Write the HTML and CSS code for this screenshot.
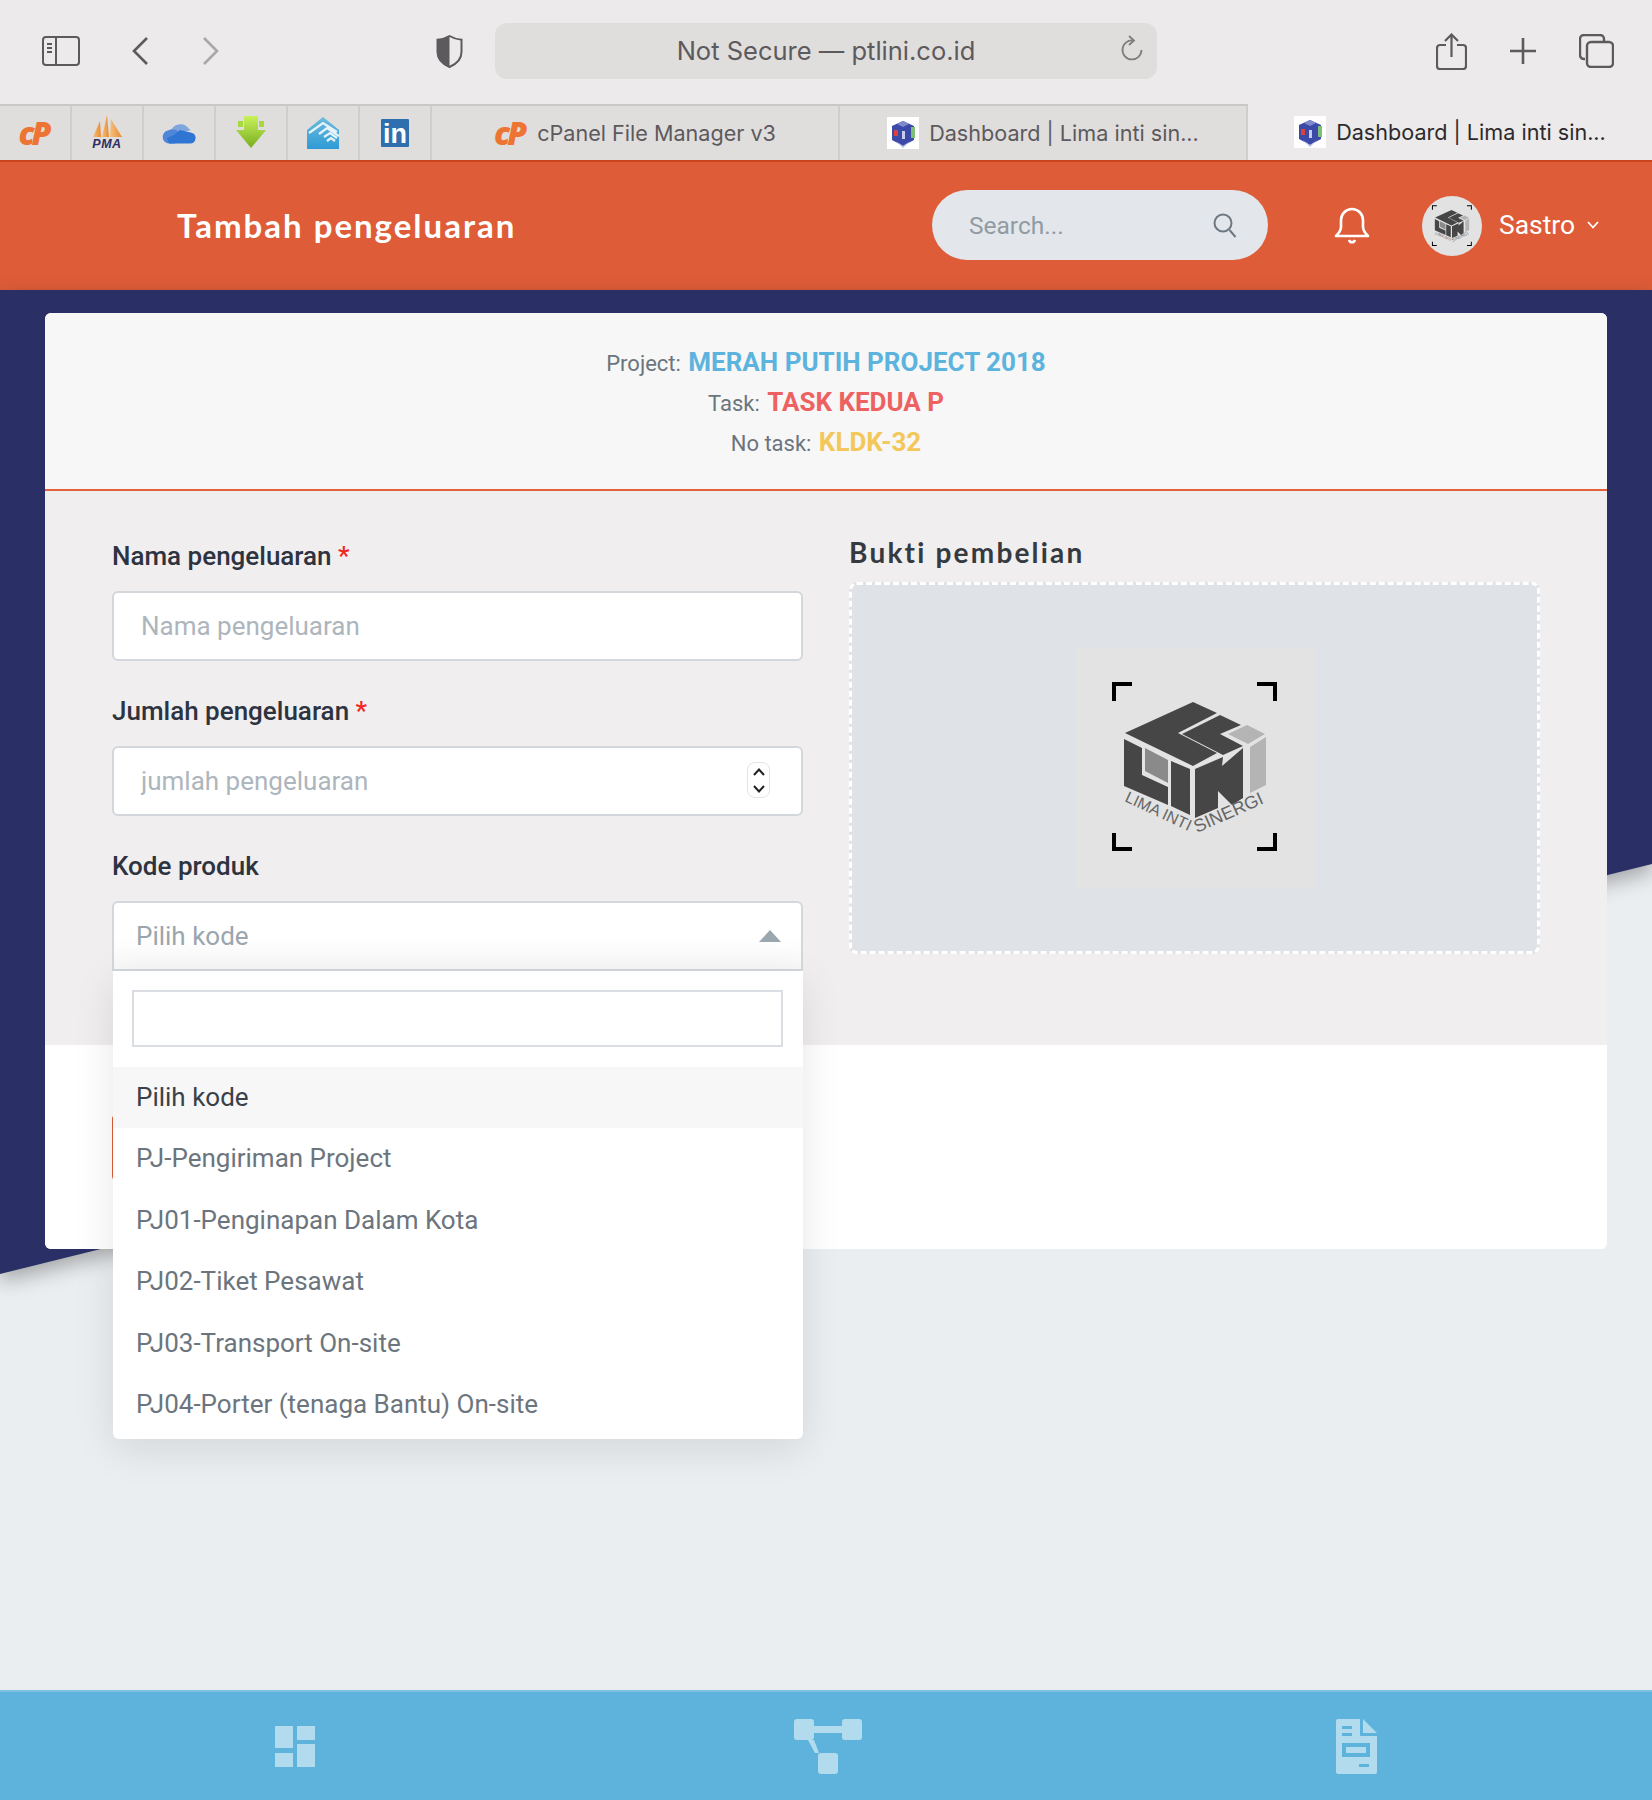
FILE: index.html
```html
<!DOCTYPE html>
<html lang="en">
<head>
  <meta charset="UTF-8" />
  <meta name="viewport" content="width=device-width, initial-scale=1" />
  <title>Tambah pengeluaran</title>
  <link rel="stylesheet" href="styles.css">
</head>

<body>

<svg class="defs" width="0" height="0">
  <defs>
    <symbol id="lisLogo" viewBox="0 0 240 240">
      <g fill="#464646">
        <polygon points="118,54 142,65 103,85 142,105 118,118 50,85" />
        <polygon points="145,67 166,77 145,86 168,98 148,107 107,86" />
        <polygon points="49,91 67,100 67,127 93,139 93,157 49,138" />
        <polygon points="96,113 115,121 115,167 96,158" />
        <polygon points="120,121 148,109 147,118 168,100 168,150 157,157 143,143 143,160 120,170" />
      </g>
      <polygon fill="#b4b4b4" points="172,77 190,86 173,96 153,86" />
      <polygon fill="#b4b4b4" points="175,99 191,89 191,137 175,145" />
      <polygon fill="#8a8a8a" points="70,100 93,112 93,135 70,123" />
      <g fill="#000">
        <path d="M37 34h20v4H41v15h-4z" />
        <path d="M182 34h20v19h-4V38h-16z" />
        <path d="M37 185h4v14h16v4H37z" />
        <path d="M198 185h4v18h-20v-4h16z" />
      </g>
      <g class="logo-text">
        <text transform="translate(49 153) rotate(25)">LIMA INTI</text>
        <text class="logo-text-big" transform="translate(122 185) rotate(-24)">SINERGI</text>
      </g>
    </symbol>
    <symbol id="favCube" viewBox="0 0 32 32">
      <rect width="32" height="32" fill="#fff" />
      <g class="fav-blur">
        <polygon fill="#3b49a8" points="16,4 27,9 27,23 16,29 5,23 5,9" />
        <polygon fill="#7f8acb" points="16,4 22,7 16,10 10,7" />
        <rect x="7" y="13" width="4" height="6" fill="#d8423a" />
        <rect x="24" y="10" width="4" height="11" fill="#7cc173" />
        <rect x="15" y="14" width="3" height="8" fill="#c8cdec" />
        <polygon fill="#b9bee3" points="9,24 16,29 23,24 16,31" />
      </g>
    </symbol>
  </defs>
</svg>

<div class="browser-bar">
  <div class="bar-left">
    <svg width="38" height="30" viewBox="0 0 38 30" fill="none" stroke="#5c5a5c" stroke-width="2">
      <rect x="1" y="1" width="36" height="28" rx="3" />
      <path d="M14 1v28M5 8h5M5 12h5M5 16h5" />
    </svg>
    <svg class="nav-back" width="16" height="28" viewBox="0 0 16 28" fill="none" stroke="#5c5a5c" stroke-width="2.6">
      <path d="M15 1 2 14l13 13" />
    </svg>
    <svg class="nav-forward" width="16" height="28" viewBox="0 0 16 28" fill="none" stroke="#a9a7a8" stroke-width="2.6">
      <path d="M1 1l13 13L1 27" />
    </svg>
  </div>
  <svg class="shield" width="27" height="33" viewBox="0 0 27 33">
    <path d="M13.5 1C10 3 6 4.500 1.500 4.800V17c0 7 5 12 12 15 7-3 12-8 12-15V4.800C21 4.500 17 3 13.500 1z" fill="none" stroke="#5c5a5c" stroke-width="2" />
    <path d="M13.500 1C10 3 6 4.500 1.500 4.800V17c0 7 5 12 12 15z" fill="#5c5a5c" />
  </svg>
  <div class="url-bar">
    <span>Not Secure — ptlini.co.id</span>
    <svg class="reload" width="22" height="26" viewBox="0 0 22 26" fill="none" stroke="#7f7d7f" stroke-width="1.800">
      <path d="M12 5.500A9.500 9.500 0 1 0 20.500 15" />
      <path d="M8 1l5 4.500L8 10" />
    </svg>
  </div>
  <div class="bar-right">
    <svg width="31" height="37" viewBox="0 0 31 37" fill="none" stroke="#5c5a5c" stroke-width="2.200">
      <path d="M10 12H4a3 3 0 0 0-3 3v18a3 3 0 0 0 3 3h23a3 3 0 0 0 3-3V15a3 3 0 0 0-3-3h-6" />
      <path d="M15.500 24V1.500M9 8l6.500-6.500L22 8" />
    </svg>
    <svg width="28" height="28" viewBox="0 0 28 28" fill="none" stroke="#5c5a5c" stroke-width="2.600">
      <path d="M14 1v26M1 14h26" />
    </svg>
    <svg width="35" height="34" viewBox="0 0 35 34" fill="none" stroke="#5c5a5c" stroke-width="2.400">
      <path d="M6 25H5a4 4 0 0 1-4-4V5a4 4 0 0 1 4-4h16a4 4 0 0 1 4 4v2" />
      <rect x="8" y="8" width="26" height="25" rx="4" />
    </svg>
  </div>
</div>

<div class="tab-bar">
  <div class="pin-tab"><span class="cp-logo">cP</span></div>
  <div class="pin-tab">
    <svg class="pma" width="36" height="38" viewBox="0 0 36 38">
      <defs>
        <linearGradient id="sail" x1="0" y1="0" x2="1" y2="0">
          <stop offset="0" stop-color="#f4c07e" />
          <stop offset="1" stop-color="#e88a30" />
        </linearGradient>
      </defs>
      <polygon fill="url(#sail)" points="4,23 11,7 12,23" />
      <polygon fill="url(#sail)" points="13,23 18,1 20,23" />
      <polygon fill="url(#sail)" points="21,23 22,5 33,23" />
      <text x="18" y="34" class="pma-text">PMA</text>
    </svg>
  </div>
  <div class="pin-tab">
    <svg width="34" height="22" viewBox="0 0 34 22">
      <path d="M9 9a10 10 0 0 1 18-2 7 7 0 0 1 2 1l-16 5z" fill="#7fa6dd" />
      <path d="M7 21.500a6.500 6.500 0 0 1-1-12.900A8 8 0 0 1 18 13L13 21.500z" fill="#4f86d8" />
      <path d="M7 21.500h21a5.500 5.500 0 0 0 1.500-10.800L18 8l-6 5-7 3z" fill="#2f75d3" />
    </svg>
  </div>
  <div class="pin-tab">
    <svg width="32" height="34" viewBox="0 0 32 34">
      <defs>
        <linearGradient id="dlGreen" x1="0" y1="0" x2="0" y2="1">
          <stop offset="0" stop-color="#c9f25a" />
          <stop offset="1" stop-color="#79ad20" />
        </linearGradient>
      </defs>
      <polygon fill="url(#dlGreen)" points="9,0 23,0 23,14 31,14 16,32 1,14 9,14" />
      <path d="M3 5h5v6H3zM24 5h5v6h-5z" fill="#a6d840" />
    </svg>
  </div>
  <div class="pin-tab">
    <svg width="32" height="32" viewBox="0 0 32 32">
      <defs>
        <linearGradient id="houseBlue" x1="0" y1="0" x2="0" y2="1">
          <stop offset="0" stop-color="#6dbbdc" />
          <stop offset="1" stop-color="#2f9bd6" />
        </linearGradient>
      </defs>
      <polygon fill="url(#houseBlue)" points="16,0 32,13 32,32 0,32 0,13" />
      <path d="M2 16 16 6l14 9M12 17l8-6 12 8M17 20l6-4 7 5M20 24l4-3 4 3" fill="none" stroke="#e6f4fa" stroke-width="2.200" />
    </svg>
  </div>
  <div class="pin-tab"><span class="in-logo">in</span></div>
  <div class="tab"><span class="cp-logo">cP</span>cPanel File Manager v3</div>
  <div class="tab">
    <svg width="32" height="32"><use href="#favCube" /></svg>
    Dashboard | Lima inti sin...
  </div>
  <div class="tab tab-active">
    <svg width="32" height="32"><use href="#favCube" /></svg>
    Dashboard | Lima inti sin...
  </div>
</div>

<header class="top-header">
  <h1 class="page-title">Tambah pengeluaran</h1>
  <div class="search-pill">
    <span>Search...</span>
    <svg width="24" height="25" viewBox="0 0 24 25" fill="none" stroke="#6f7880" stroke-width="2">
      <circle cx="10" cy="10" r="8.500" />
      <path d="M16.500 17l6 7" />
    </svg>
  </div>
  <svg class="bell" width="36" height="37" viewBox="0 0 36 37" fill="none" stroke="#fff" stroke-width="2.600">
    <path d="M2 29h32c-3-3-5-5-5-9v-7a11 11 0 0 0-22 0v7c0 4-2 6-5 9z" stroke-linejoin="round" />
    <path d="M15 33c1 3 5 3 6 0" />
  </svg>
  <div class="avatar"><svg width="58" height="58"><use href="#lisLogo" /></svg></div>
  <span class="user-name">Sastro</span>
  <svg class="user-caret" width="12" height="8" viewBox="0 0 12 8" fill="none" stroke="#fff" stroke-width="1.800">
    <path d="M1 1l5 5.500L11 1" />
  </svg>
</header>

<main class="page">
  <div class="backdrop"><div class="backdrop-shape"></div></div>

  <section class="card">
    <div class="card-head">
      <p>Project: <strong class="blue">MERAH PUTIH PROJECT 2018</strong></p>
      <p>Task: <strong class="red">TASK KEDUA P</strong></p>
      <p>No task: <strong class="yellow">KLDK-32</strong></p>
    </div>

    <div class="form-body">
      <div class="form-col">
        <div class="form-group">
          <label>Nama pengeluaran <span class="req">*</span></label>
          <input type="text" placeholder="Nama pengeluaran" />
        </div>

        <div class="form-group">
          <label>Jumlah pengeluaran <span class="req">*</span></label>
          <div class="number-wrap">
            <input type="text" placeholder="jumlah pengeluaran" />
            <div class="spinner">
              <svg width="12" height="8" viewBox="0 0 12 8" fill="none" stroke="#222" stroke-width="2"><path d="M1 7l5-5.500L11 7" /></svg>
              <svg width="12" height="8" viewBox="0 0 12 8" fill="none" stroke="#222" stroke-width="2"><path d="M1 1l5 5.500L11 1" /></svg>
            </div>
          </div>
        </div>

        <div class="form-group">
          <label>Kode produk</label>
          <div class="select-wrap">
            <div class="select-box">
              <span>Pilih kode</span>
              <i class="select-arrow"></i>
            </div>
            <div class="select-drop">
              <div class="drop-search"><input type="text" /></div>
              <ul class="drop-list">
                <li class="active">Pilih kode</li>
                <li>PJ-Pengiriman Project</li>
                <li>PJ01-Penginapan Dalam Kota</li>
                <li>PJ02-Tiket Pesawat</li>
                <li>PJ03-Transport On-site</li>
                <li>PJ04-Porter (tenaga Bantu) On-site</li>
              </ul>
            </div>
          </div>
        </div>
      </div>

      <div class="form-col">
        <h2 class="upload-title">Bukti pembelian</h2>
        <div class="dropzone">
          <div class="preview"><svg width="240" height="240"><use href="#lisLogo" /></svg></div>
        </div>
      </div>
    </div>

    <div class="card-foot">
      <button class="save-btn" aria-label="Simpan"></button>
    </div>
  </section>
</main>

<nav class="bottom-nav">
  <svg width="40" height="41" viewBox="0 0 40 41" fill="#b3dbee">
    <rect x="0" y="0" width="18" height="22" />
    <rect x="22" y="0" width="18" height="14" />
    <rect x="0" y="27" width="18" height="14" />
    <rect x="22" y="18" width="18" height="23" />
  </svg>
  <svg class="nav-mid" width="68" height="55" viewBox="0 0 68 55" fill="#b3dbee">
    <rect x="0" y="0" width="20" height="21" rx="3" />
    <rect x="48" y="0" width="20" height="21" rx="3" />
    <rect x="24" y="34" width="20" height="21" rx="3" />
    <rect x="20" y="7" width="28" height="7" />
    <polygon points="14,21 20,21 25,34 21,34" />
  </svg>
  <svg width="41" height="55" viewBox="0 0 41 55">
    <path fill="#b3dbee" fill-rule="evenodd" d="M2 0h22v17h17v36a2 2 0 0 1-2 2H2a2 2 0 0 1-2-2V2a2 2 0 0 1 2-2zM6 7v3h10V7zM6 14v3h10v-3zM6 24v14h28V24zM23 45v3h10v-3z" />
    <path fill="#b3dbee" d="M27 0l14 14H27zM10 28h20v6H10z" />
  </svg>
</nav>

</body>
</html>
```

FILE: styles.css
```css
* {
  box-sizing: border-box;
}

body {
  font-family: Roboto, 'Liberation Sans', sans-serif;
  background: #ebeef1;
  margin: 0;
  min-height: 100vh;
  display: flex;
  flex-direction: column;
}

.defs {
  position: absolute;
}

/* browser chrome */
.browser-bar {
  height: 104px;
  background: #edeaeb;
  display: flex;
  align-items: center;
  padding: 0 38px 2px 42px;
}

.bar-left {
  display: flex;
  align-items: center;
  width: 394px;
}

.nav-back {
  margin-left: 52px;
}

.nav-forward {
  margin-left: 55px;
}

.url-bar {
  width: 662px;
  height: 56px;
  margin-left: 32px;
  background: #e0dddd;
  border-radius: 12px;
  display: flex;
  align-items: center;
  justify-content: center;
  position: relative;
  padding-bottom: 1px;
  font-family: Inter, sans-serif;
  font-size: 25.500px;
  color: #5c5a5c;
}

.reload {
  position: absolute;
  right: 14px;
  top: 12px;
}

.bar-right {
  margin-left: auto;
  display: flex;
  align-items: center;
  gap: 42px;
}

.tab-bar {
  height: 56px;
  display: flex;
  background: #e0dddd;
  border-top: 2px solid #c9c7c7;
  font-family: Inter, sans-serif;
  font-size: 21.600px;
  color: #5c5a5c;
}

.pin-tab {
  width: 72px;
  border-right: 2px solid #cfcdcd;
  display: flex;
  align-items: center;
  justify-content: center;
}

.tab {
  width: 408px;
  border-right: 2px solid #cfcdcd;
  display: flex;
  align-items: center;
  justify-content: center;
  gap: 10px;
}

.tab-active {
  flex: 1;
  background: #edeaeb;
  border-right: none;
  color: #2c2a2c;
  margin-top: -2px;
}

.fav-blur {
  filter: blur(0.7px);
}

.cp-logo {
  font-family: 'Open Sans', sans-serif;
  font-weight: 800;
  font-style: italic;
  font-size: 32px;
  line-height: 32px;
  letter-spacing: -3px;
  color: #ee7433;
  padding-right: 3px;
}

.in-logo {
  width: 28px;
  height: 28px;
  background: #2f6fb0;
  border-radius: 1px;
  color: #fff;
  font-family: 'Liberation Sans', sans-serif;
  font-weight: 700;
  font-size: 27px;
  line-height: 30px;
  text-align: center;
}

.pma-text {
  font-family: 'Liberation Sans', sans-serif;
  font-weight: 700;
  font-style: italic;
  font-size: 12.500px;
  letter-spacing: 0.5px;
  text-anchor: middle;
  fill: #2d2f63;
}

/* orange header */
.top-header {
  height: 130px;
  background: #de5c37;
  border-top: 2px solid #c9431d;
  display: flex;
  align-items: center;
  padding: 0 0 2px 177px;
  color: #fff;
}

.page-title {
  margin: 0;
  font-family: Lato, sans-serif;
  font-weight: 700;
  font-size: 33px;
  letter-spacing: 2px;
  width: 755px;
}

.search-pill {
  width: 336px;
  height: 70px;
  border-radius: 35px;
  background: #e3e6ea;
  display: flex;
  align-items: center;
  justify-content: space-between;
  padding: 0 31px 0 37px;
  font-size: 24.500px;
  color: #919ba3;
}

.bell {
  margin-left: 66px;
}

.avatar {
  width: 60px;
  height: 60px;
  margin: 2px 0 0 52px;
  border-radius: 50%;
  background: #e2e2e2;
  display: flex;
  align-items: center;
  justify-content: center;
}

.user-name {
  margin-left: 17px;
  font-size: 26.400px;
}

.user-caret {
  margin-left: 12px;
}

/* page */
.page {
  flex: 1;
  position: relative;
  padding: 23px 45px 0;
}

.backdrop {
  position: absolute;
  left: 0;
  right: 0;
  top: 0;
  height: 990px;
  filter: drop-shadow(0 8px 10px rgba(0, 0, 0, 0.3));
}

.backdrop-shape {
  height: 100%;
  background: #2a3065;
  clip-path: polygon(0 0, 100% 0, 100% 574px, 0 984px);
}

.card {
  position: relative;
  background: #fff;
  border-radius: 6px;
}

.card-head {
  background: #f7f7f7;
  border-radius: 6px 6px 0 0;
  border-bottom: 2px solid #e4613b;
  padding: 29px 0 27px;
  text-align: center;
  font-size: 22px;
  color: #6c757d;
  height: 178px;
}

.card-head p {
  margin: 0;
  height: 40px;
  line-height: 40px;
}

.card-head strong {
  font-size: 26px;
  margin-left: 2px;
}

.blue { color: #5cb3dd; }
.red { color: #ee6161; }
.yellow { color: #f3c75a; }

.form-body {
  background: #f0eeef;
  height: 554px;
  padding: 50px 67px 0;
  display: grid;
  grid-template-columns: 691px 691px;
  column-gap: 46px;
}

.form-group {
  margin-bottom: 35px;
}

.form-group label {
  display: block;
  height: 31px;
  line-height: 31px;
  margin-bottom: 19px;
  font-size: 26px;
  font-weight: 500;
  color: #2d3340;
}

.req {
  color: #f0281e;
}

.form-group input {
  width: 100%;
  height: 70px;
  padding: 0 27px;
  border: 2px solid #d3d7db;
  border-radius: 6px;
  background: #fff;
  font-family: inherit;
  font-size: 26px;
}

.form-group input::placeholder {
  color: #adb5bd;
}

.number-wrap {
  position: relative;
}

.spinner {
  position: absolute;
  right: 33px;
  top: 16px;
  width: 23px;
  height: 36px;
  background: #fff;
  border: 1px solid #e2e4e7;
  border-radius: 8px;
  display: flex;
  flex-direction: column;
  align-items: center;
  justify-content: space-around;
}

.select-wrap {
  position: relative;
  z-index: 5;
}

.select-box {
  height: 70px;
  padding: 0 20px 0 22px;
  border: 2px solid #d3d7db;
  border-radius: 6px 6px 0 0;
  background: linear-gradient(#fff 50%, #f8f8f8);
  display: flex;
  align-items: center;
  justify-content: space-between;
  font-size: 26px;
  color: #9aa5ad;
}

.select-arrow {
  width: 0;
  height: 0;
  border-left: 11px solid transparent;
  border-right: 11px solid transparent;
  border-bottom: 12px solid #9aa7ae;
}

.select-drop {
  position: absolute;
  top: 100%;
  left: 1px;
  right: 0;
  height: 468px;
  background: #fff;
  border-radius: 0 0 6px 6px;
  box-shadow: 0 10px 40px rgba(0, 0, 0, 0.1);
}

.drop-search {
  padding: 19px 20px 20px 19px;
}

.form-group .drop-search input {
  display: block;
  height: 57px;
  padding: 0 10px;
  border-radius: 0;
  border: 2px solid #dadee3;
}

.drop-list {
  list-style: none;
  margin: 0;
  padding: 0;
}

.drop-list li {
  height: 61.400px;
  line-height: 61.400px;
  padding-left: 23px;
  font-size: 26px;
  color: #6c757d;
}

.drop-list .active {
  background: #f7f7f7;
  color: #3a4149;
}

.upload-title {
  margin: -3px 0 15px;
  height: 29px;
  line-height: 29px;
  font-family: Lato, sans-serif;
  font-weight: 700;
  font-size: 28px;
  letter-spacing: 2.200px;
  color: #343a40;
}

.dropzone {
  height: 372px;
  background: #dfe2e6;
  border: 3px dashed #fff;
  border-radius: 8px;
  display: flex;
  align-items: center;
  justify-content: center;
}

.preview {
  width: 240px;
  height: 240px;
  background: #e3e3e3;
}

.logo-text {
  font-family: 'Liberation Sans', sans-serif;
  font-size: 16px;
  fill: #666;
}

.logo-text-big {
  font-size: 18px;
}

.card-foot {
  height: 204px;
  padding: 70px 67px 0;
  background: #fff;
  border-radius: 0 0 6px 6px;
}

.save-btn {
  display: block;
  width: 200px;
  height: 65px;
  background: #de5c37;
  border: none;
  border-radius: 4px;
}

/* bottom nav */
.bottom-nav {
  height: 110px;
  background: #5eb3dc;
  border-top: 2px solid #7dc0e1;
  display: flex;
  align-items: center;
  justify-content: space-between;
  padding: 0 275px;
}

.nav-mid {
  margin-left: 5px;
}
```
